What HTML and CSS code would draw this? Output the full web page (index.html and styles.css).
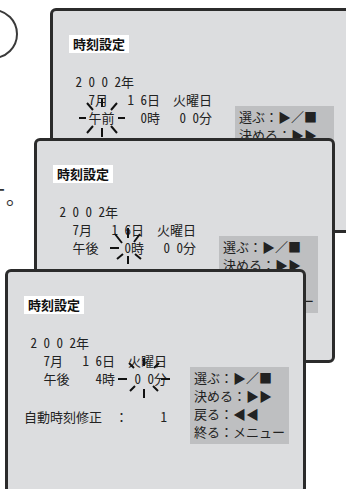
FILE: index.html
```html
<!DOCTYPE html>
<html lang="ja">
<head>
    <link rel="stylesheet" href="styles.css">
    <meta charset="UTF-8">
    <meta name="viewport" content="width=device-width, initial-scale=1.0">
    <title>時刻設定</title>
</head>
<body>
    <div class="figure">
        <!-- 左の本文の端 -->
        <div class="circle"></div>
        <div class="dash">ー</div>
        <div class="maru">。</div>

        <!-- 画面1：午前/午後 -->
        <div class="panel p1">
            <div class="info">
                <div class="title">時刻設定</div>
                <div class="date">
                    <div class="line"> 2 0 0 2年</div>
                    <div class="line">   7月   1 6日  火曜日</div>
                    <div class="line">   <span class="blink">午前<svg class="spark" width="64" height="48" viewBox="-32 -24 64 48"><path d="M-23 0H-16M16 0H23M0 -19V-11M0 10V19M-15 -15L-9 -8M15 -15L9 -8M-15 15L-9 8M15 15L9 8"/></svg></span>    0時   0 0分</div>
                </div>
            </div>
            <div class="menu">
                <div>選ぶ：▶／■</div>
                <div>決める：▶▶</div>
                <div>戻る：◀◀</div>
                <div>終る：メニュー</div>
            </div>
        </div>

        <!-- 画面2：時 -->
        <div class="panel p2">
            <div class="info">
                <div class="title">時刻設定</div>
                <div class="date">
                    <div class="line"> 2 0 0 2年</div>
                    <div class="line">   7月   1 6日  火曜日</div>
                    <div class="line">   午後    <span class="blink">0<svg class="spark" width="64" height="48" viewBox="-32 -24 64 48"><path d="M-18 0H-9M0 -20V-10M0 8V16M-13 -14L-6 -5M12 -14L6 -6M-11 11L-5 6M7 6L13 11"/></svg></span>時   0 0分</div>
                </div>
            </div>
            <div class="menu">
                <div>選ぶ：▶／■</div>
                <div>決める：▶▶</div>
                <div>戻る：◀◀</div>
                <div>終る：メニュー</div>
            </div>
        </div>

        <!-- 画面3：分 -->
        <div class="panel p3">
            <div class="info">
                <div class="title">時刻設定</div>
                <div class="date">
                    <div class="line"> 2 0 0 2年</div>
                    <div class="line">   7月   1 6日  火曜日</div>
                    <div class="line">   午後    4時   <span class="blink">0 0<svg class="spark" width="64" height="48" viewBox="-32 -24 64 48"><path d="M-26 0H-17M17 0H26M0 -21V-13M0 10V19M-15 -16L-10 -11M15 -16L10 -11M-14 12L-9 7M14 12L9 7"/></svg></span>分</div>
                </div>
                <div class="line auto">自動時刻修正  ：     1</div>
            </div>
            <div class="menu">
                <div>選ぶ：▶／■</div>
                <div>決める：▶▶</div>
                <div>戻る：◀◀</div>
                <div>終る：メニュー</div>
            </div>
        </div>
    </div>
</body>
</html>
```

FILE: styles.css
```css
/* 時刻設定の画面 */
body {
    margin: 0;
    width: 346px;
    height: 489px;
    overflow: hidden;
    background-color: #fff;
    color: #222;
    font-family: "Noto Sans Mono CJK JP", "Noto Sans CJK JP", sans-serif;
}

/* 全部同じセルに重ねる */
.figure {
    display: grid;
}

.figure > * {
    grid-area: 1 / 1;
    align-self: start;
    justify-self: start;
}

.circle {
    width: 46px;
    height: 46px;
    border: 2px solid #3a3a3a;
    border-radius: 50%;
    margin: 9px 0 0 -32px;
}

.dash,
.maru {
    font-size: 20px;
    line-height: 20px;
    color: #333;
}

.dash {
    margin: 180px 0 0 -14px;
}

.maru {
    margin: 187px 0 0 6px;
}

.panel {
    position: relative;
    display: flex;
    width: 301px;
    height: 225px;
    box-sizing: border-box;
    border: 3px solid #2b2b2b;
    border-radius: 6px;
    background-color: #dcdddf;
    padding: 24px 0 0 16px;
    font-size: 13px;
    line-height: 18px;
}

.p1 {
    z-index: 1;
    margin: 8px 0 0 50px;
}

.p2 {
    z-index: 2;
    margin: 138px 0 0 34px;
}

.p3 {
    z-index: 3;
    margin: 269px 0 0 5px;
}

.info {
    flex: none;
    width: 166px;
}

.title {
    display: inline-block;
    padding: 0 4px;
    background-color: #fff;
    color: #111;
    font-weight: bold;
}

.date {
    margin-top: 20px;
}

.line {
    white-space: pre;
}

.auto {
    margin-top: 20px;
}

.menu {
    flex: none;
    align-self: flex-start;
    width: 99px;
    box-sizing: border-box;
    margin-top: 71px;
    padding: 2px 0 3px 4px;
    background-color: #bebfc1;
    white-space: nowrap;
}

.blink {
    position: relative;
}

.spark {
    position: absolute;
    left: 50%;
    top: 50%;
    transform: translate(-50%, -50%);
    overflow: visible;
    fill: none;
    stroke: #111;
    stroke-width: 2;
}
```
